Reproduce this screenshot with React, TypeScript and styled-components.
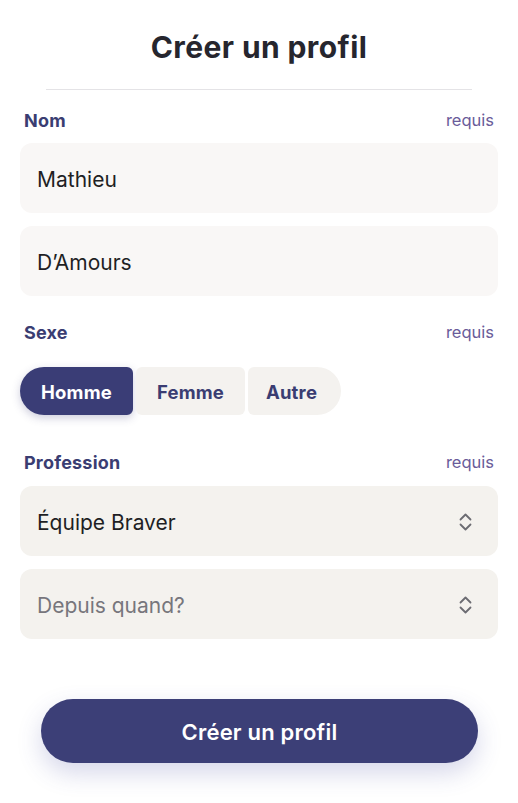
import React, { useState } from "react";
import styled, { createGlobalStyle } from "styled-components";

const GlobalStyle = createGlobalStyle`
  * { box-sizing: border-box; }
  body {
    margin: 0;
    background: #ffffff;
    font-family: "Inter", "Noto Sans", sans-serif;
    -webkit-font-smoothing: antialiased;
  }
`;

const Page = styled.div`
  width: 518px;
  padding: 30px 20px 40px;
  display: flex;
  flex-direction: column;
`;

const Title = styled.h1`
  margin: 0;
  font-size: 30px;
  line-height: 34px;
  font-weight: 700;
  color: #26262e;
  text-align: center;
  letter-spacing: 0.4px;
`;

const Divider = styled.hr`
  border: none;
  height: 1px;
  background: #e4e3e6;
  margin: 25px 26px 0;
`;

const LabelRow = styled.div<{ $top: number }>`
  display: flex;
  justify-content: space-between;
  align-items: center;
  height: 20px;
  margin: ${(p) => p.$top}px 4px 0;
`;

const Label = styled.span`
  font-size: 18px;
  font-weight: 700;
  color: #3a3d72;
  letter-spacing: 0.2px;
`;

const Required = styled.span`
  font-size: 16.5px;
  color: #6a5c9a;
`;

const FieldStack = styled.div<{ $top: number }>`
  display: flex;
  flex-direction: column;
  gap: 13px;
  margin-top: ${(p) => p.$top}px;
`;

const TextInput = styled.input`
  height: 70px;
  border: none;
  border-radius: 12px;
  background: #f9f7f6;
  padding: 2px 17px 0;
  font-family: inherit;
  font-size: 21px;
  color: #1f1f24;
  outline: none;
`;

const SelectBox = styled.div<{ $placeholder?: boolean }>`
  height: 70px;
  border-radius: 12px;
  background: #f4f2ee;
  padding: 2px 26px 0 17px;
  display: flex;
  align-items: center;
  justify-content: space-between;
  font-size: 21px;
  color: ${(p) => (p.$placeholder ? "#77767c" : "#1f1f24")};
`;

const Segmented = styled.div`
  display: flex;
  gap: 3px;
  margin-top: 25px;
  height: 48px;
`;

const Segment = styled.button<{ $active?: boolean; $pos: "first" | "mid" | "last" }>`
  border: none;
  font-family: inherit;
  font-size: 18.5px;
  font-weight: 700;
  letter-spacing: 0.2px;
  cursor: pointer;
  background: ${(p) => (p.$active ? "#3a3d76" : "#f4f2ef")};
  color: ${(p) => (p.$active ? "#ffffff" : "#3a3d72")};
  box-shadow: ${(p) => (p.$active ? "0 3px 8px rgba(58, 61, 118, 0.25)" : "none")};
  border-radius: ${(p) =>
    p.$pos === "first" ? "24px 6px 6px 24px" : p.$pos === "last" ? "6px 24px 24px 6px" : "6px"};
  width: ${(p) => (p.$pos === "first" ? 113 : p.$pos === "mid" ? 109 : 93)}px;
  padding: ${(p) => (p.$pos === "last" ? "2px 6px 0 0" : "2px 0 0")};
`;

const SubmitButton = styled.button`
  margin: 60px 20px 0 21px;
  height: 64px;
  border: none;
  border-radius: 32px;
  background: #3c3f77;
  color: #ffffff;
  font-family: inherit;
  font-size: 22px;
  font-weight: 600;
  letter-spacing: 0.2px;
  padding-top: 2px;
  box-shadow: 0 10px 24px rgba(70, 72, 160, 0.22);
  cursor: pointer;
`;

const UpDown = () => (
  <svg width="13" height="20" viewBox="0 0 13 20" fill="none">
    <path
      d="M1.5 7.5 6.5 2.5 11.5 7.5M1.5 12.5 6.5 17.5 11.5 12.5"
      stroke="#6c6c72"
      strokeWidth="1.8"
      strokeLinecap="round"
      strokeLinejoin="round"
    />
  </svg>
);

const options = ["Homme", "Femme", "Autre"];

export default function App() {
  const [sexe, setSexe] = useState("Homme");
  return (
    <Page>
      <GlobalStyle />
      <Title>Créer un profil</Title>
      <Divider />

      <LabelRow $top={20}>
        <Label>Nom</Label>
        <Required>requis</Required>
      </LabelRow>
      <FieldStack $top={13}>
        <TextInput defaultValue="Mathieu" />
        <TextInput defaultValue="D’Amours" />
      </FieldStack>

      <LabelRow $top={26}>
        <Label>Sexe</Label>
        <Required>requis</Required>
      </LabelRow>
      <Segmented>
        {options.map((o, i) => (
          <Segment
            key={o}
            $active={sexe === o}
            $pos={i === 0 ? "first" : i === options.length - 1 ? "last" : "mid"}
            onClick={() => setSexe(o)}
          >
            {o}
          </Segment>
        ))}
      </Segmented>

      <LabelRow $top={37}>
        <Label>Profession</Label>
        <Required>requis</Required>
      </LabelRow>
      <FieldStack $top={14}>
        <SelectBox>
          Équipe Braver
          <UpDown />
        </SelectBox>
        <SelectBox $placeholder>
          Depuis quand?
          <UpDown />
        </SelectBox>
      </FieldStack>

      <SubmitButton>Créer un profil</SubmitButton>
    </Page>
  );
}
